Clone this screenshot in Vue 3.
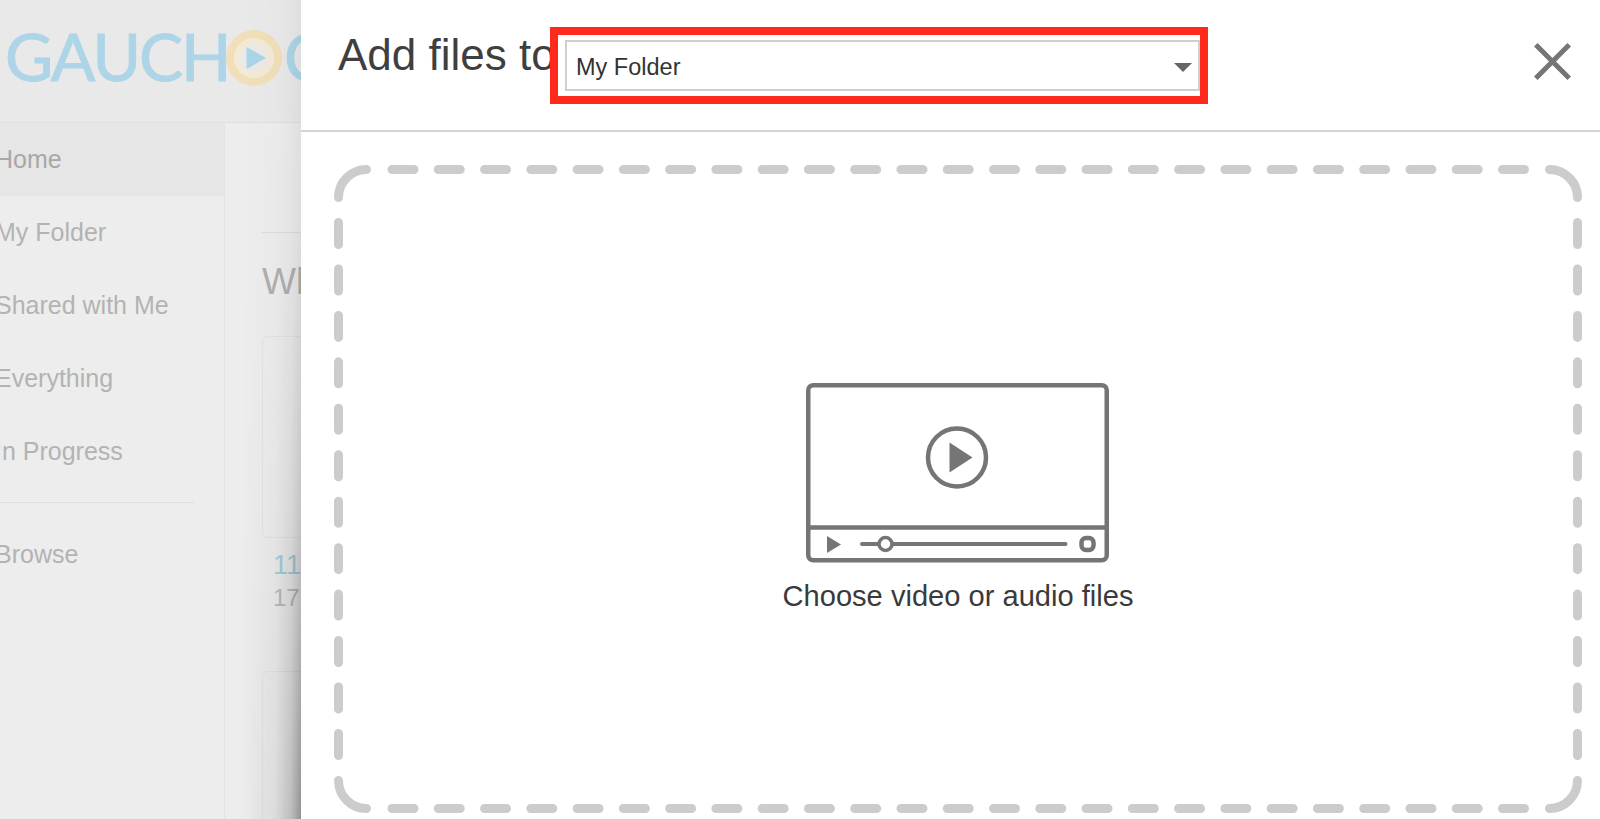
<template>
  <div class="page">
    <!-- dimmed page behind the panel -->
    <div class="backdrop">
      <header class="top-bar">
        <span class="logo-text">GAUCH</span>
        <svg class="logo-mark" width="56" height="56" viewBox="0 0 56 56">
          <circle cx="28" cy="28" r="28" fill="#f0dfb8" />
          <circle cx="28" cy="28" r="20" fill="#f3ead6" />
          <circle cx="28" cy="28" r="14" fill="#eae9e6" />
          <path d="M20.500 17L40 28L20.500 39Z" fill="#aad5e8" />
        </svg>
        <span class="logo-text">C</span>
      </header>
      <div class="content">
        <nav class="sidebar">
          <a v-for="item in navTop" :key="item" class="nav-item" :class="{ active: item === 'Home' }">{{ item }}</a>
          <div class="nav-divider"></div>
          <a class="nav-item browse">Browse</a>
        </nav>
        <main class="main">
          <div class="rule"></div>
          <h2 class="heading">What's new</h2>
          <div class="card"></div>
          <div class="card-title">11</div>
          <div class="card-meta">17</div>
          <div class="card second"></div>
        </main>
      </div>
    </div>

    <section class="panel">
      <div class="panel-header">
        <h3 class="panel-title">Add files to</h3>
        <div class="highlight">
          <div class="select">
            <span>My Folder</span>
            <i class="caret"></i>
          </div>
        </div>
        <button class="close-btn" aria-label="Close">
          <svg width="37" height="37" viewBox="0 0 37 37">
            <path d="M1.8 1.8L35.2 35.2M35.2 1.8L1.8 35.2" stroke="#757575" stroke-width="5" fill="none" />
          </svg>
        </button>
      </div>

      <div class="dropzone">
        <svg class="dash" width="1248" height="648" viewBox="0 0 1248 648">
          <g fill="none" stroke="#cccccc" stroke-width="9" stroke-linecap="round">
            <!-- corners -->
            <path d="M4.5 32.5A28 28 0 0 1 32.5 4.5" />
            <path d="M1215.5 4.5A28 28 0 0 1 1243.5 32.5" />
            <path d="M1243.5 615.5A28 28 0 0 1 1215.5 643.5" />
            <path d="M32.5 643.5A28 28 0 0 1 4.5 615.5" />
            <!-- sides -->
            <path d="M58 4.5H1191" stroke-dasharray="22 24.27" />
            <path d="M58 643.5H1191" stroke-dasharray="22 24.27" />
            <path d="M4.5 57.5V591" stroke-dasharray="22 24.45" />
            <path d="M1243.5 57.5V591" stroke-dasharray="22 24.45" />
          </g>
        </svg>

        <div class="choose">
          <svg class="video-icon" width="304" height="180" viewBox="0 0 304 180">
            <g fill="none" stroke="#757575" stroke-width="4.5">
              <rect x="2.25" y="2.25" width="298.500" height="175" rx="5" />
              <path d="M2 144.5H302" />
              <circle cx="151" cy="74.5" r="29" />
              <path d="M56 161H259.500" stroke-linecap="round" stroke-width="4" />
              <circle cx="79.500" cy="161" r="6.500" fill="#fff" stroke-width="3.500" />
              <rect x="275.500" y="155" width="12" height="12" rx="4.500" stroke-width="4.500" />
            </g>
            <path d="M143.500 59.500L166.500 74.500L143.500 89.500Z" fill="#757575" />
            <path d="M21 153L35 161.500L21 170Z" fill="#757575" />
          </svg>
          <span class="choose-label">Choose video or audio files</span>
        </div>
      </div>
    </section>
  </div>
</template>

<script setup>
const navTop = ['Home', 'My Folder', 'Shared with Me', 'Everything', 'In Progress']
</script>

<style>
html, body {
  margin: 0;
  background: #ededed;
}
</style>

<style scoped>
.page {
  position: relative;
  width: 1600px;
  height: 819px;
  overflow: hidden;
  font-family: "Liberation Sans", Arial, sans-serif;
  background: #ededed;
}

.backdrop {
  display: flex;
  flex-direction: column;
  height: 100%;
}

.top-bar {
  height: 123px;
  box-sizing: border-box;
  display: flex;
  align-items: center;
  padding: 0 0 6px 5px;
  background: #e9e9e9;
  border-bottom: 1px solid #e0e0e0;
  overflow: hidden;
  flex-shrink: 0;
}

.logo-text {
  margin-bottom: 4px;
  font-family: Lato, "Open Sans", sans-serif;
  font-size: 66px;
  line-height: 1;
  letter-spacing: -2px;
  color: #add5e7;
  -webkit-text-stroke: 1px #add5e7;
}

.logo-mark {
  flex-shrink: 0;
  margin: 0 2px 0 -3.500px;
}

.content {
  flex: 1;
  display: flex;
  min-height: 0;
}

.sidebar {
  width: 225px;
  flex-shrink: 0;
  box-sizing: border-box;
  border-right: 1px solid #e3e3e3;
  overflow: hidden;
}

.nav-item {
  display: block;
  height: 73px;
  line-height: 73px;
  font-size: 25px;
  color: #b3b3b3;
  text-indent: -5px;
  white-space: nowrap;
}

.nav-item.active {
  background: #e6e6e6;
  color: #a8a8a8;
}

.nav-divider {
  width: 194px;
  height: 1px;
  margin-top: 14px;
  background: #dddddd;
}

.browse {
  margin-top: 15px;
}

.main {
  flex: 1;
  padding: 109px 0 0 37px;
  overflow: hidden;
}

.rule {
  height: 1px;
  background: #dddddd;
}

.heading {
  margin: 28px 0 0;
  font-size: 36px;
  line-height: 42px;
  font-weight: 400;
  color: #b0b0b0;
  white-space: nowrap;
}

.card {
  height: 202px;
  box-sizing: border-box;
  margin-top: 33px;
  border: 1px solid #e3e3e3;
  border-radius: 6px;
}

.card-title {
  margin: 12px 0 0 11px;
  font-size: 27px;
  line-height: 30px;
  color: #a6cfdf;
}

.card-meta {
  margin: 3px 0 0 11px;
  font-size: 24px;
  line-height: 30px;
  color: #bcbcbc;
}

.card.second {
  height: 200px;
  margin-top: 58px;
}

.panel {
  position: absolute;
  top: 0;
  right: 0;
  bottom: 0;
  width: 1299px;
  display: flex;
  flex-direction: column;
  background: #fff;
}

/* shadow falls stronger toward the bottom of the panel */
.panel::before {
  content: "";
  position: absolute;
  top: 0;
  bottom: 0;
  right: 100%;
  width: 60px;
  background: linear-gradient(to left, rgba(0, 0, 0, 0.38), rgba(0, 0, 0, 0.2) 10px, rgba(0, 0, 0, 0.07) 26px, rgba(0, 0, 0, 0));
  -webkit-mask-image: linear-gradient(to bottom, rgba(0, 0, 0, 0.1), rgba(0, 0, 0, 0.2) 30%, rgba(0, 0, 0, 0.45) 62%, #000);
  mask-image: linear-gradient(to bottom, rgba(0, 0, 0, 0.1), rgba(0, 0, 0, 0.2) 30%, rgba(0, 0, 0, 0.45) 62%, #000);
}

.panel-header {
  height: 132px;
  box-sizing: border-box;
  flex-shrink: 0;
  display: flex;
  align-items: flex-start;
  padding: 27px 29px 0 37px;
  border-bottom: 2px solid #d4d4d4;
}

.panel-title {
  width: 212px;
  flex-shrink: 0;
  margin: 1px 0 0;
  font-size: 44px;
  line-height: 54px;
  font-weight: 400;
  color: #3f3f3f;
  white-space: nowrap;
}

.highlight {
  position: relative;
  width: 658px;
  height: 77px;
  box-sizing: border-box;
  flex-shrink: 0;
  border: 8px solid #ff2a1c;
  padding: 5px 0 5px 7px;
  background: #fff;
}

.select {
  height: 51px;
  box-sizing: border-box;
  display: flex;
  align-items: center;
  justify-content: space-between;
  padding: 3px 6px 0 9px;
  border: 2px solid #cfcfcf;
  font-size: 23.500px;
  color: #333;
}

.caret {
  width: 0;
  height: 0;
  border-left: 9px solid transparent;
  border-right: 9px solid transparent;
  border-top: 9px solid #666;
}

.close-btn {
  margin: 16px 0 0 auto;
  padding: 0;
  width: 37px;
  height: 37px;
  border: none;
  background: none;
  cursor: pointer;
}

.close-btn svg {
  display: block;
}

.dropzone {
  position: relative;
  flex: 1;
  margin: 33px 18px 6px 33px;
  display: flex;
  align-items: center;
  justify-content: center;
}

.dash {
  position: absolute;
  top: 0;
  left: 0;
}

.choose {
  display: flex;
  flex-direction: column;
  align-items: center;
  gap: 17px;
  margin-top: 16px;
}

.video-icon {
  display: block;
}

.choose-label {
  font-size: 29.100px;
  line-height: 32px;
  color: #3a3a3a;
}
</style>
